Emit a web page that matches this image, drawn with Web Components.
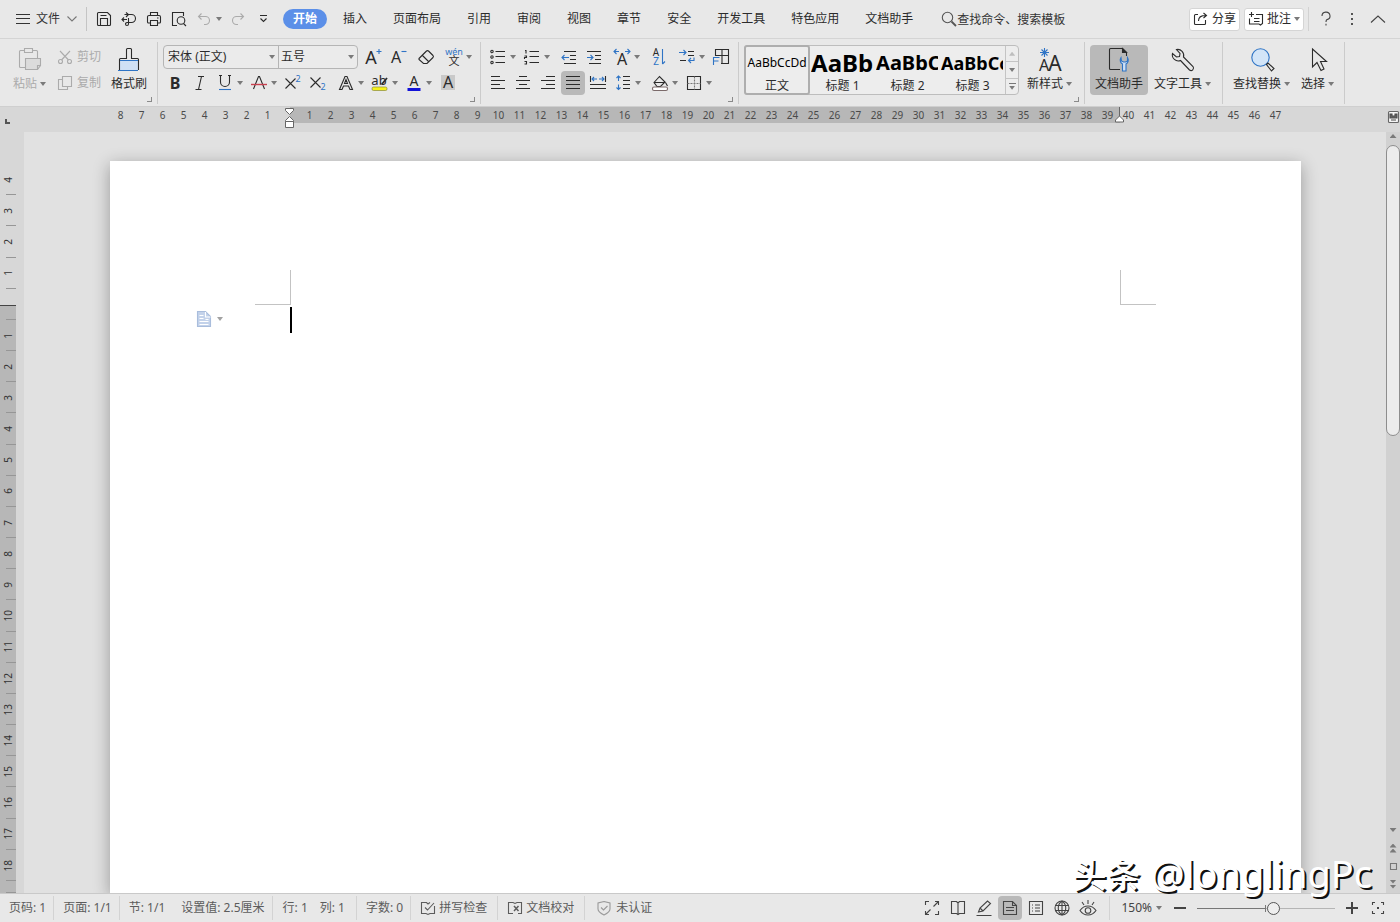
<!DOCTYPE html>
<html lang="zh-CN">
<head>
<meta charset="utf-8">
<title>文字文稿</title>
<style>
  html, body { margin: 0; height: 100%; }
  body { font: 12px/16px "Noto Sans", "Noto Sans CJK SC", sans-serif; color: #2b2b2b; background: #e1e1e1; overflow: hidden; }
</style>
</head>
<body>
<wps-app>
  <wps-menubar slot="menu"></wps-menubar>
  <wps-ribbon slot="ribbon"></wps-ribbon>
  <wps-hruler slot="hruler"></wps-hruler>
  <wps-vruler slot="vruler"></wps-vruler>
  <wps-page slot="page"></wps-page>
  <wps-scrollbar slot="scroll"></wps-scrollbar>
  <wps-statusbar slot="status"></wps-statusbar>
  <wps-watermark slot="overlay"><span slot="cjk">头条</span> @longlingPc</wps-watermark>
</wps-app>

<script>
const B = '#2f74c5';
const T = (x, y, s, t, extra = '') => `<text x="${x}" y="${y}" font-size="${s}" fill="currentColor" stroke="none" text-anchor="middle" ${extra}>${t}</text>`;
/* name: [width, height, markup] */
const ICONS = {
  menu: [14, 14, '<path d="M0 2.500h14M0 6.500h14M0 11.500h14"/>'],
  chev: [10, 8, '<path d="M.5 1.500 5 6l4.500-4.500"/>'],
  save: [16, 16, '<path d="M1.500 2.500a1 1 0 0 1 1-1h9l3 3v9a1 1 0 0 1-1 1h-11a1 1 0 0 1-1-1zM4.500 14V7.500h7V14M4.500 4.500h6"/>'],
  export: [16, 16, '<path d="M3.500 3.500h7a4 4 0 0 1 0 8H8M5 1.500 7.500 3.500 5 6M7.500 7v6a1.500 1.500 0 0 1-3 0c0-1.300 1-1.800 3.500-1.800M1 8.500h5M3 6.500 1 8.500l2 2"/>'],
  print: [16, 16, '<path d="M4.500 4.500v-3h7v3M4.500 12h-2a1 1 0 0 1-1-1V6a1.500 1.500 0 0 1 1.500-1.500h10A1.500 1.500 0 0 1 14.500 6v5a1 1 0 0 1-1 1h-2M4.500 9.500h7v5h-7zM11 7h1.500"/>'],
  preview: [16, 16, '<path d="M6 14.500H1.500v-13h11V5M12.500 12.500l2.500 2.500"/><circle cx="10" cy="9.500" r="3.800"/>'],
  undo: [14, 14, '<path d="M4.500 1.500 1.500 4.500l3 3M2 4.500h6.500a3.800 3.800 0 0 1 0 8H7"/>'],
  redo: [14, 14, '<path d="M9.500 1.500l3 3-3 3M12 4.500H5.500a3.800 3.800 0 0 0 0 8H7"/>'],
  more: [9, 8, '<path d="M1 .5h7M1.500 3.500l3 3 3-3"/>'],
  search: [16, 16, '<circle cx="6.500" cy="6.500" r="5.200"/><path d="M10.500 10.500l4.500 4.500" stroke-width="1.800"/>'],
  share: [16, 14, '<path d="M5 2.500H2.500a1 1 0 0 0-1 1v8a1 1 0 0 0 1 1h9a1 1 0 0 0 1-1V8M5.500 9c0-4 2-5.500 7.500-5.500M10.500 1 13.500 3.500 10.500 6"/>'],
  note: [16, 14, '<path d="M3.500 0v5M1 2.500h5M8 2.500h6.500v9l-2 1.500-1.500-1H1.500V6.500M6 6.500h5.500M6 9.500h5.500"/>'],
  help: [12, 16, '<path d="M2 5a4 3.800 0 1 1 5 3.600c-1 .5-1 1-1 2.400M6 12.800v1.700"/>'],
  dots: [4, 14, '<path d="M2 1v2M2 6v2M2 11v2" stroke-width="1.800"/>'],
  up: [14, 8, '<path d="M0 7.500 7 1l7 6.500"/>'],
  paste: [26, 26, '<path d="M8 20.500H3.500a1 1 0 0 1-1-1v-15a1 1 0 0 1 1-1H7M16 3.500h3.500a1 1 0 0 1 1 1V11M7.500 1.500h8v4h-8z"/><path fill="#dcdcdc" d="M8.500 11.500h15v7l-3 4h-12z"/><path d="M23.500 18.500h-3v4"/>'],
  cut: [16, 16, '<path d="M3 2l8.500 9M13 2 4.500 11"/><circle cx="3.500" cy="12.500" r="2"/><circle cx="12.500" cy="12.500" r="2"/>'],
  copy: [16, 16, '<path d="M5.500 1.500h9v10h-9zM5.500 4.500h-4v10h9v-3"/>'],
  brush: [26, 26, `<path fill="#cfe0f5" stroke="none" d="M4 14h18v9H4z"/><path d="M3.500 23V12.500a1 1 0 0 1 1-1h6v-9a1 1 0 0 1 1-1h3a1 1 0 0 1 1 1v9h6a1 1 0 0 1 1 1V23"/><path stroke="${B}" d="M4 13.500h18M2 23.500h20"/>`],
  aplus: [18, 18, T(7, 16, 18, 'A') + `<path stroke="${B}" d="M12.500 3.500h5M15 1v5"/>`],
  aminus: [18, 18, T(7, 15, 16, 'A') + `<path stroke="${B}" d="M12.500 3.500h5"/>`],
  eraser: [18, 18, '<path d="M2 10.500 9.500 3a1.500 1.500 0 0 1 2 0L16 7.500a1.500 1.500 0 0 1 0 2L10 15.500H6.500L2 11.500zM5.500 7.500l6 6"/>'],
  wen: [18, 20, `<g color="${B}">${T(9, 8, 9, 'wén')}</g>` + T(9, 18, 11, '文')],
  bold: [18, 18, T(9, 15, 16, 'B', 'font-weight="700"')],
  italic: [18, 18, '<path d="M7 2.500h6M4.500 15.500h6M10.500 2.500l-3 13"/>'],
  underline: [18, 18, `<path d="M4.500 1.500V8a4.500 4.500 0 0 0 9 0V1.500M3 1.500h3M12 1.500h3"/><path stroke="${B}" d="M3 15.500h12"/>`],
  strike: [18, 18, '<path d="M3.500 15 8.500 2.500h1l5 12.500"/><path stroke="#c8414f" stroke-width="1.400" d="M1 10.500h16"/>'],
  sup: [18, 18, `<path d="M1.500 4.500l10 10M11.500 4.500l-10 10"/><g color="${B}">${T(14, 8, 9, '2')}</g>`],
  sub: [18, 18, `<path d="M1.500 3.500l10 10M11.500 3.500l-10 10"/><g color="${B}">${T(14, 16, 9, '2')}</g>`],
  outline: [18, 18, '<path d="M2.500 15.500 8 2.500h2l5.500 13h-2.500L11.500 12h-5L5 15.500zM7.500 9.500h3L9 5.500z"/>'],
  mark: [18, 20, T(8, 12, 13, 'ab') + '<path d="M11 11l5-6" stroke-width="1.800"/><rect x="1" y="14" width="15" height="3.500" rx="1.500" fill="#f6f21a" stroke="#8a8a3a" stroke-width=".7"/>'],
  color: [18, 20, T(9, 13, 14, 'A') + '<path stroke="#1212d8" stroke-width="3" d="M2.500 16.500h13"/>'],
  shade: [18, 18, '<path fill="#c9c9c9" stroke="none" d="M2 1h14v15H2z"/>' + T(9, 14, 16, 'A')],
  bullets: [16, 16, '<path d="M5.500 2.500H15M5.500 7.500H15M5.500 13.500H15"/><circle cx="2" cy="2.500" r="1.200"/><circle cx="2" cy="8" r="1.200"/><circle cx="2" cy="13.500" r="1.200"/>'],
  numbers: [16, 16, '<path d="M5.500 2.500H15M5.500 7.500H15M5.500 13.500H15M1 1.500h1v3M.5 7h2v1.500h-2v1.500M.5 12.500h2v2.500h-2"/>'],
  outdent: [16, 16, `<path d="M3 2.500h12M9 6.500h6M9 10.500h6M3 14.500h12"/><path stroke="${B}" d="M1 8.500h7M3.500 6 1 8.500 3.500 11"/>`],
  indent: [16, 16, `<path d="M1 2.500h14M9 6.500h6M9 10.500h6M3 14.500h12"/><path stroke="${B}" d="M1 8.500h6M4.500 6 7 8.500 4.500 11"/>`],
  scale: [18, 18, T(9, 17, 16, 'A') + `<path stroke="${B}" d="M1 3.500h5M3.500 1 1 3.500 3.500 6M12 3.500h5M14.500 1 17 3.500 14.500 6"/>`],
  sort: [16, 18, T(5, 8, 10, 'A') + `<g color="${B}">${T(5, 17, 10, 'Z')}</g><path stroke="${B}" d="M11.500 1v15M11.500 16l2.500-2.500"/>`],
  tabs: [18, 18, `<path d="M10 3.500h6M10 7.500h6M2 12.500h6"/><path stroke="${B}" d="M1 4.500h7M5.500 2 8 4.500 5.500 7M16 9.500v3h-5M13 10l-2.500 2.500 2.500 2.500"/>`],
  frame: [18, 18, `<path d="M3.500 8V1.500h13v14H9M10 1.500v14M4 7.500h12.500"/><path stroke="${B}" d="M1.500 17V9.500h6M1.500 13h5"/>`],
  left: [16, 14, '<path d="M1 .5h9M1 4.500h14M1 8.500h9M1 12.500h14"/>'],
  center: [16, 14, '<path d="M4 .5h8M1 4.500h14M4 8.500h8M1 12.500h14"/>'],
  right: [16, 14, '<path d="M6 .5h9M1 4.500h14M6 8.500h9M1 12.500h14"/>'],
  justify: [16, 14, '<path d="M1 .5h14M1 4.500h14M1 8.500h14M1 12.500h14"/>'],
  distribute: [18, 16, `<path d="M1 9.500h16M1 13.500h16M1.500 1v6M16.500 1v6"/><path stroke="${B}" d="M3 4h5M5 2 3 4l2 2M10 4h5M13 2l2 2-2 2"/>`],
  spacing: [16, 16, `<path d="M8 1.500h7M8 5.500h7M8 9.500h7M8 13.500h7"/><path stroke="${B}" d="M3.500 1v5M1.500 3l2-2 2 2M3.500 9.500v5M1.500 12.500l2 2 2-2"/>`],
  bucket: [18, 18, '<path d="M3 8.500 8.500 2.500 14 8l-4.500 4.500H6zM3 8.500h11M14.500 8.500l2 3.500"/><rect x="1.500" y="13" width="15" height="3.500" rx="1.500" fill="#fff" stroke="#7b6a6a"/>'],
  border: [18, 18, '<path d="M2.500 2.500h13v13h-13z"/><path stroke="#777" d="M9.500 2.500v13M2.500 9.500h13" stroke-dasharray="2 1"/>'],
  newstyle: [26, 26, T(7, 24, 16, 'A') + T(18, 24, 21, 'A') + `<path stroke="${B}" d="M3 5.500h9M7.500 1v9M4.500 2.500l6 6M10.500 2.500l-6 6"/>`],
  dochelp: [26, 26, '<path d="M14 22.500H4.500a1 1 0 0 1-1-1v-19a1 1 0 0 1 1-1h12l4 4V9"/><path fill="currentColor" d="M16.500 1.500v4h4z"/><path fill="#cfe0f5" stroke="#2f74c5" d="M15 10.500a4.500 4.500 0 0 0 1.500 6.500v7h3.500v-7a4.500 4.500 0 0 0 1.500-6.500v3.500l-2 1h-2l-2-1z"/>'],
  wrench: [26, 26, '<path d="M6.500 2.500a6 6 0 0 1 7 7.500l9.500 9.500a2.500 2.500 0 0 1-3.500 3.500L10.500 13.500A6 6 0 0 1 2.500 6.500l4 3.500 3-.5.500-3z"/>'],
  find: [26, 26, `<circle cx="11.500" cy="10.500" r="8.700" fill="#d3e5f8" stroke="${B}"/><path d="M17.500 17.500l1.500-1.500 6 5.500-2.500 2.500z"/>`],
  pointer: [26, 26, '<path d="M7.500 2v18l4.500-4.500 4 8 3-1.500-3.500-7.500h6z"/>'],
  square: [9, 9, '<path d="M1.500 1.500h6v6h-6z"/>'],
  spell: [16, 14, '<path d="M10 1.500 8 3 6.500 1.500h-5v11H6l2 1 2-1h4.500V5M5 6.500 7.500 9 14 2"/>'],
  proof: [16, 14, '<path d="M6 12.500H1.500v-11H6l2 1 2-1h4.500v11H11"/><path stroke-width="1.500" d="M7 5l4.500 5M11.500 5 7 10"/>'],
  shield: [14, 16, '<path d="M7 1.500 13 3v6c0 3-3 4.500-6 6-3-1.500-6-3-6-6V3zM4 7.500 6.500 10l4-4"/>'],
  full: [16, 16, '<path d="M1.500 5V1.500H5M11 1.500h3.500V5M14.500 11v3.500H11M5 14.500H1.500V11M9.500 6.500l5-5M6.500 9.500l-5 5"/>'],
  book: [16, 16, '<path d="M8 3 6.500 1.500h-5v12h5L8 14.500l1.500-1h5v-12h-5zM8 3v11.500"/>'],
  pen: [16, 16, '<path d="M2.500 12 4 8l7.500-7 3 2.500L7 11zM4 8l3 3M.5 15.500h15"/>'],
  doc: [16, 16, '<path d="M1.500 1.500h9l4 4v9h-13zM10.500 1.500v4h4M4 7.500h8M4 10.500h8"/>'],
  outlineview: [16, 16, '<path d="M1.500 1.500h13v13h-13zM7 5h5M7 8h5M7 11h5M4 5h1M4 8h1M4 11h1"/>'],
  globe: [16, 16, '<circle cx="8" cy="8" r="7"/><path d="M8 1v14M1 5.500h14M1 10.500h14M8 1c-5 3.500-5 10.500 0 14M8 1c5 3.500 5 10.500 0 14"/>'],
  eye: [18, 18, '<path d="M1 11.500c4-6 12-6 16 0-4 6-12 6-16 0zM9 1v4M3 3l2 3M15 3l-2 3"/><circle cx="9" cy="11.500" r="2.800"/>'],
  minus: [14, 14, '<path d="M1 7h12" stroke-width="2"/>'],
  plus: [14, 14, '<path d="M1 7h12M7 1v12" stroke-width="2"/>'],
  focus: [14, 14, '<path d="M1.500 4V1.500H4M10 1.500h2.500V4M12.500 10v2.500H10M4 12.500H1.500V10"/><path d="M6 7h2" stroke-width="2"/>'],
  para: [14, 16, '<path fill="#c3d2ea" stroke="#a9bddc" d="M.5.500h8l5 5v10H.500z"/><path stroke="#fff" d="M8.500 1v5h5M2.500 4.500h4M2.500 7.500h4M2.500 10.500h9M2.500 13.500h9M8.500 8.500h3"/>'],
  reveal: [11, 12, '<rect x=".5" y=".5" width="10" height="11" rx="1" fill="#f5f5f5" stroke="#666"/><path fill="#666" d="M2 3h2v2h3V3h2v4H2zM3 9h5"/>']
};

function define(name, css, html) {
  customElements.define(name, class extends HTMLElement {
    connectedCallback() {
      if (this.shadowRoot) return;
      const root = this.attachShadow({ mode: 'open' });
      root.innerHTML = `<style>*,:host{box-sizing:border-box}button,select,input{font:inherit;color:inherit;margin:0}button{border:0;background:none;padding:0;cursor:default}${css}</style>` +
        (typeof html === 'function' ? html(this) : html);
    }
  });
}

define('wps-icon', ':host{display:inline-flex;flex:none}svg{display:block;overflow:visible}', el => {
  const [w, h, d] = ICONS[el.getAttribute('name')];
  return `<svg width="${w}" height="${h}" viewBox="0 0 ${w} ${h}" fill="none" stroke="currentColor" stroke-width="1.1" aria-hidden="true">${d}</svg>`;
});

define('wps-caret', ':host{display:block;flex:none;width:6px;height:4px;background:#7a7a7a;clip-path:polygon(0 0,100% 0,50% 100%)}:host([up]){clip-path:polygon(50% 0,100% 100%,0 100%)}:host([wide]){width:7px}', '');

/* small ribbon or toolbar button: icon with an optional drop-down arrow */
define('wps-tool', `
  :host{display:block;flex:none}
  button{display:flex;align-items:center;height:24px;border-radius:4px}
  span{display:flex;justify-content:center;width:24px}
  button{width:25px}
  :host([caret]) button{width:34px}
  :host([active]) button{background:#b9b9b9;width:24px;margin-right:1px}
  :host([off]) button{color:#ababab}`,
  el => `<button title="${el.getAttribute('tip') || ''}"><span><wps-icon name="${el.getAttribute('icon')}"></wps-icon></span>${el.hasAttribute('caret') ? '<wps-caret></wps-caret>' : ''}</button>`);

/* large ribbon button: icon above its label */
define('wps-big', `
  :host{display:block;flex:none}
  button{display:flex;flex-direction:column;align-items:center;height:50px;padding-top:2px;border-radius:4px;white-space:nowrap}
  :host([active]) button{background:#b9b9b9;padding-left:5px;padding-right:5px}
  :host([off]) button{color:#ababab}
  .l{display:flex;align-items:center;gap:3px;margin-top:3px}`,
  el => `<button><wps-icon name="${el.getAttribute('icon')}"></wps-icon><span class="l"><slot></slot>${el.hasAttribute('caret') ? '<wps-caret></wps-caret>' : ''}</span></button>`);

define('wps-group', `
  :host{display:flex;position:relative;flex:none;height:62px;padding:3px var(--r,5px) 0 var(--l,5px);border-right:1px solid #cbcbcb}
  i{position:absolute;right:5px;bottom:2px;width:5px;height:5px;border:solid #8a8a8a;border-width:0 1px 1px 0}`,
  el => `<slot></slot>${el.hasAttribute('launcher') ? '<i></i>' : ''}`);

define('wps-tab', `
  :host{display:block;flex:none}
  button{height:20px;padding:0 13px;white-space:nowrap}
  :host([active]) button{margin:0 3px;padding:0 10px;border-radius:10px;background:#5b8fe8;color:#fff;font-weight:700}`,
  '<button role="tab"><slot></slot></button>');

define('wps-menubar', `
  :host{display:flex;align-items:center;height:39px;background:#e8e8e8;border-bottom:1px solid #d4d4d4}
  .file{display:flex;align-items:center;height:24px;padding:0 9px 0 16px;border-right:1px solid #c4c4c4;color:#333}
  .file span{margin:0 7px 0 6px}.file wps-icon+span+wps-icon{color:#777}
  .quick{display:flex;padding:0 4px 0 5px}
  nav{display:flex}
  .find{display:flex;align-items:center;margin-left:15px;flex:1;min-width:0}
  .find input{width:120px;padding:0;border:0;background:none;outline:0;height:20px}
  .find input::placeholder{color:#333;opacity:1}
  .find label{display:flex;color:#555}
  .card{display:flex;align-items:center;height:23px;padding:0 3px;border:1px solid #d5d5d5;border-radius:3px;background:#fff;gap:3px;margin-right:4px;white-space:nowrap;flex:none}
  .end{display:flex;align-items:center;justify-content:space-between;flex:none;width:92px;height:24px;padding:0 15px 0 11px;border-left:1px solid #d2d2d2;color:#444}
  .end button{display:flex}`, `
  <button class="file"><wps-icon name="menu"></wps-icon><span>文件</span><wps-icon name="chev"></wps-icon></button>
  <div class="quick">
    <wps-tool icon="save" tip="保存"></wps-tool><wps-tool icon="export" tip="输出"></wps-tool><wps-tool icon="print" tip="打印"></wps-tool><wps-tool icon="preview" tip="打印预览"></wps-tool>
    <wps-tool icon="undo" caret off tip="撤销"></wps-tool><wps-tool icon="redo" off tip="恢复"></wps-tool><wps-tool icon="more" tip="更多"></wps-tool>
  </div>
  <nav role="tablist"><wps-tab active>开始</wps-tab>${['插入', '页面布局', '引用', '审阅', '视图', '章节', '安全', '开发工具', '特色应用', '文档助手'].map(t => `<wps-tab>${t}</wps-tab>`).join('')}</nav>
  <div class="find"><label for="q" aria-label="搜索"><wps-icon name="search"></wps-icon></label><input id="q" placeholder="查找命令、搜索模板"></div>
  <button class="card"><wps-icon name="share"></wps-icon>分享</button>
  <button class="card"><wps-icon name="note"></wps-icon>批注<wps-caret></wps-caret></button>
  <div class="end"><button title="帮助"><wps-icon name="help"></wps-icon></button><button title="更多"><wps-icon name="dots"></wps-icon></button><button title="折叠"><wps-icon name="up"></wps-icon></button></div>`);

define('wps-style', `
  :host{display:block;width:65px;flex:none}
  button{display:block;width:100%;height:48px;padding:0 1px;text-align:center}
  :host([active]){margin:-1px 0 -1px -1px;width:66px}
  :host([active]) button{border:2px solid #aeaeae;border-radius:3px;height:50px;padding:0}
  .s{display:block;width:62px;height:32px;line-height:32px;overflow:hidden;text-align:left;white-space:nowrap;color:#000;font-size:var(--s);font-weight:var(--w,700)}
  :host([active]) .s{text-align:center}
  .n{display:block;line-height:14px}`,
  '<button><span class="s"><slot name="sample"></slot></span><span class="n"><slot></slot></span></button>');

define('wps-gallery', `
  :host{display:flex;flex:none;width:275px;height:50px;border:1px solid #bdbdbd;border-radius:4px;background:#ededed}
  .bar{display:flex;flex-direction:column;flex:1;border-left:1px solid #c4c4c4}
  .bar button{display:flex;flex-direction:column;flex:1;align-items:center;justify-content:center;gap:2px}
  .bar button+button{border-top:1px solid #c4c4c4}
  .bar button:first-child{opacity:.4}
  i{width:7px;height:1px;background:#777}`, `
  <wps-style active style="--s:12px;--w:400"><span slot="sample">AaBbCcDd</span>正文</wps-style>
  <wps-style style="--s:24px"><span slot="sample">AaBb</span>标题 1</wps-style>
  <wps-style style="--s:20px"><span slot="sample">AaBbC</span>标题 2</wps-style>
  <wps-style style="--s:18px"><span slot="sample">AaBbCc</span>标题 3</wps-style>
  <div class="bar"><button title="上一行"><wps-caret up></wps-caret></button><button title="下一行"><wps-caret></wps-caret></button><button title="展开"><i></i><wps-caret></wps-caret></button></div>`);

define('wps-combo', `
  :host{display:flex;width:195px;height:24px;border:1px solid #b5b5b5;border-radius:4px;background:#ebebeb}
  div{display:flex;align-items:center;flex:1;min-width:0;padding-right:3px}
  div+div{flex:0 0 79px;border-left:1px solid #b5b5b5}
  select{appearance:none;flex:1;min-width:0;border:0;background:none;padding:0 0 0 4px;outline:0;height:22px}
  div+div select{padding-left:2px}`, `
  <div><select aria-label="字体"><option>宋体 (正文)</option></select><wps-caret></wps-caret></div>
  <div><select aria-label="字号"><option>五号</option></select><wps-caret></wps-caret></div>`);

define('wps-ribbon', `
  :host{display:flex;height:68px;padding-top:3px;background:#e8e8e8;border-bottom:1px solid #cfcfcf}
  .rows{display:flex;flex-direction:column;gap:2px}
  .row,.set{display:flex}.row{gap:3px}
  .clip{display:flex;flex-direction:column;gap:2px;margin:0 10px 0 11px}
  .clip button{display:flex;align-items:center;gap:4px;height:24px;color:#ababab}
  .g8{margin-left:8px}.g6{margin-left:6px}.g11{margin-left:11px}`, `
  <wps-group launcher style="--l:13px;--r:10px">
    <wps-big icon="paste" caret off>粘贴</wps-big>
    <div class="clip"><button><wps-icon name="cut"></wps-icon>剪切</button><button><wps-icon name="copy"></wps-icon>复制</button></div>
    <wps-big icon="brush">格式刷</wps-big>
  </wps-group>
  <wps-group launcher style="--r:4px"><div class="rows">
    <div class="row"><wps-combo></wps-combo><div class="set"><wps-tool icon="aplus"></wps-tool><wps-tool icon="aminus"></wps-tool></div><wps-tool icon="eraser"></wps-tool><wps-tool icon="wen" caret></wps-tool></div>
    <div class="row"><div class="set"><wps-tool icon="bold"></wps-tool><wps-tool icon="italic"></wps-tool><wps-tool icon="underline" caret></wps-tool><wps-tool icon="strike" caret></wps-tool><wps-tool icon="sup"></wps-tool><wps-tool icon="sub"></wps-tool></div>
    <div class="set"><wps-tool icon="outline" caret></wps-tool><wps-tool icon="mark" caret></wps-tool><wps-tool icon="color" caret></wps-tool><wps-tool icon="shade"></wps-tool></div></div>
  </div></wps-group>
  <wps-group launcher style="--r:4px"><div class="rows">
    <div class="row"><div class="set"><wps-tool icon="bullets" caret></wps-tool><wps-tool icon="numbers" caret></wps-tool></div><div class="set"><wps-tool icon="outdent"></wps-tool><wps-tool icon="indent"></wps-tool></div><wps-tool icon="scale" caret></wps-tool><wps-tool icon="sort"></wps-tool><div class="set"><wps-tool icon="tabs" caret></wps-tool><wps-tool icon="frame"></wps-tool></div></div>
    <div class="row"><div class="set"><wps-tool icon="left"></wps-tool><wps-tool icon="center"></wps-tool><wps-tool icon="right"></wps-tool><wps-tool icon="justify" active></wps-tool><wps-tool icon="distribute"></wps-tool><wps-tool icon="spacing" caret></wps-tool></div>
    <div class="set"><wps-tool icon="bucket" caret></wps-tool><wps-tool icon="border" caret></wps-tool></div></div>
  </div></wps-group>
  <wps-group launcher style="--r:12px"><wps-gallery></wps-gallery><wps-big class="g8" icon="newstyle" caret>新样式</wps-big></wps-group>
  <wps-group style="--r:11px"><wps-big icon="dochelp" active>文档助手</wps-big><wps-big class="g6" icon="wrench" caret>文字工具</wps-big></wps-group>
  <wps-group style="--l:10px;--r:10px"><wps-big icon="find" caret>查找替换</wps-big><wps-big class="g11" icon="pointer" caret>选择</wps-big></wps-group>`);

const range = (a, b) => Array.from({ length: Math.abs(b - a) + 1 }, (_, i) => a < b ? a + i : a - i);

define('wps-hruler', `
  :host{display:flex;height:25px;background:#d7d7d7;color:#4a4a4a;font-size:10px}
  .corner{flex:0 0 110px;padding:12px 0 0 5px}
  .corner i{display:block;width:5px;height:5px;border:solid #555;border-width:0 0 2px 2px}
  .scale{display:flex;flex:1;min-width:0;height:16px;overflow:visible;background:linear-gradient(90deg,transparent 180px,#b7b7b7 180px 1010px,transparent 1010px)}
  span{flex:0 0 21px;text-align:center;line-height:16px;position:relative}
  svg{position:absolute;top:0;left:6px;overflow:visible}
  .end{flex:0 0 14px;display:flex;justify-content:center;padding-top:4px}`, () => `
  <div class="corner"><i></i></div>
  <div class="scale">${range(8, 1).map(n => `<span>${n}</span>`).join('')}
    <span><svg width="11" height="21" fill="#fff" stroke="#666"><path d="M1.500 1.500h8v2l-4 4-4-4zM5.500 9.500l4 4v1h-8v-1zM1.500 14.500h8v6h-8z"/></svg></span>
    ${range(1, 47).map(n => `<span>${n}${n === 39 ? '<svg width="11" height="18" style="left:17px" fill="#fff" stroke="#666"><path d="M5.500 0v9M5.500 9l4 4v2h-8v-2z"/></svg>' : ''}</span>`).join('')}</div>
  <div class="end"><wps-icon name="reveal"></wps-icon></div>`);

define('wps-vruler', `
  :host{display:flex;flex-direction:column;width:24px;min-height:0;overflow:hidden;padding-top:32px;background:#d7d7d7;color:#333;font-size:10px}
  div{display:flex;align-items:center;justify-content:center;flex:1;width:16px;min-height:0;background:linear-gradient(#969696,#969696) 6px 100%/10px 1px no-repeat var(--c,transparent)}
  span{writing-mode:vertical-rl;transform:rotate(180deg);line-height:14px}
  .in{--c:#b7b7b7}
  .zero{background:linear-gradient(#969696,#969696) 6px 100%/10px 1px no-repeat,linear-gradient(transparent 50%,#444 50%,#444 54%,#b7b7b7 54%)}
  .last{flex:0 0 12px}`, () =>
  range(4, 1).map(n => `<div><span>${n}</span></div>`).join('') + '<div class="zero"></div>' +
  range(1, 18).map(n => `<div class="in"><span>${n}</span></div>`).join('') + '<div class="in last"></div>');

define('wps-page', `
  :host{display:block;min-width:0;padding:29px 85px 0 86px;overflow:hidden}
  article{height:100%;background:#fff;box-shadow:0 4px 16px rgba(0,0,0,.32);padding-top:109px}
  .marks{display:flex;justify-content:space-between;padding:0 145px}
  .marks i{width:36px;height:35px;border:solid #c3c3c3;border-width:0 1px 1px 0}
  .marks i+i{border-width:0 0 1px 1px}
  .line{display:flex;align-items:flex-start;height:26px;margin-top:2px;padding-left:87px}
  .line button{display:flex;align-items:center;gap:6px;width:93px;height:24px}
  .line button wps-caret{opacity:.7}
  .cursor{width:2px;height:26px;background:#000}`, `
  <article aria-label="文档"><div class="marks"><i></i><i></i></div>
  <div class="line"><button title="段落布局"><wps-icon name="para"></wps-icon><wps-caret></wps-caret></button><span class="cursor"></span></div></article>`);

define('wps-scrollbar', `
  :host{display:flex;flex-direction:column;align-items:center;width:14px;background:#d1d1d1}
  button{display:flex;flex-direction:column;align-items:center;justify-content:center;flex:none;width:14px;height:18px;gap:1px;color:#777}
  button:first-of-type{height:8px;margin-bottom:5px}
  .track{flex:1;width:14px}
  .thumb{height:291px;border:1px solid #8d8d8d;border-radius:7px;background:#ececec}`, `
  <button title="向上"><wps-caret up wide></wps-caret></button>
  <div class="track"><div class="thumb"></div></div>
  <button title="向下"><wps-caret wide></wps-caret></button>
  <button title="上一页"><wps-caret up wide></wps-caret><wps-caret up wide></wps-caret></button>
  <button title="选择浏览对象"><wps-icon name="square"></wps-icon></button>
  <button title="下一页"><wps-caret wide></wps-caret><wps-caret wide></wps-caret></button>`);

define('wps-statusbar', `
  :host{display:flex;align-items:center;height:29px;background:#e8e8e8;border-top:1px solid #c9c9c9;color:#5c5c5c;white-space:nowrap}
  .cell{display:flex;align-items:center;height:24px;padding:0 7px 0 9px;border-right:1px solid #d3d3d3;gap:16px}
  .cell.w{padding:0 11px 0 10px;gap:12px}
  .cell.i{gap:3px;padding:0 10px 0 9px}
  .cell.last{border:0;padding-left:12px;gap:5px}
  .cell.last wps-icon{color:#999}
  .views{display:flex;margin-left:auto;padding-right:8px;border-right:1px solid #d3d3d3;color:#444}
  .views button{display:flex;align-items:center;justify-content:center;width:24px;height:24px;margin:0 1px;border-radius:4px}
  .views .on{background:#b9b9b9}
  .zoom{display:flex;align-items:center;gap:4px;padding:0 11px;color:#444}
  .z{display:flex;align-items:center;color:#444}
  input{appearance:none;width:138px;height:14px;margin:0 10px;background:linear-gradient(#777,#777) 68px 50%/1px 7px no-repeat,linear-gradient(90deg,#777 50%,#b5b5b5 50%) 0 50%/100% 1px no-repeat}
  input::-webkit-slider-thumb{appearance:none;width:13px;height:13px;border:1px solid #555;border-radius:50%;background:#eee}
  .f{margin:0 15px 0 12px}`, `
  <div class="cell"><span>页码: 1</span></div>
  <div class="cell"><span>页面: 1/1</span></div>
  <div class="cell"><span>节: 1/1</span><span>设置值: 2.5厘米</span></div>
  <div class="cell w"><span>行: 1</span><span>列: 1</span></div>
  <div class="cell"><span>字数: 0</span></div>
  <button class="cell i"><wps-icon name="spell"></wps-icon>拼写检查</button>
  <button class="cell i"><wps-icon name="proof"></wps-icon>文档校对</button>
  <button class="cell i last"><wps-icon name="shield"></wps-icon>未认证</button>
  <div class="views">${[['full', '全屏'], ['book', '阅读'], ['pen', '写作'], ['doc', '页面'], ['outlineview', '大纲'], ['globe', 'Web'], ['eye', '护眼']].map(([n, t]) => `<button title="${t}"${n === 'doc' ? ' class="on"' : ''}><wps-icon name="${n}"></wps-icon></button>`).join('')}</div>
  <button class="zoom"><span>150%</span><wps-caret></wps-caret></button>
  <button class="z" title="缩小"><wps-icon name="minus"></wps-icon></button>
  <input type="range" aria-label="显示比例" min="0" max="100" value="56">
  <button class="z" title="放大"><wps-icon name="plus"></wps-icon></button>
  <button class="z f" title="适应窗口"><wps-icon name="focus"></wps-icon></button>`);

define('wps-watermark', `
  :host{position:absolute;right:28px;bottom:22px;font-size:38px;line-height:50px;color:#fff;text-shadow:2px 2px 0 #111;white-space:nowrap;pointer-events:none}
  ::slotted(span){font-size:34px;font-weight:500}`,
  '<slot name="cjk"></slot><slot></slot>');

define('wps-app', `
  :host{display:grid;grid-template-rows:auto auto auto minmax(0,1fr) auto;height:100vh;position:relative;overflow:hidden;background:#e1e1e1}
  .work{display:grid;grid-template-columns:auto minmax(0,1fr) auto;min-height:0}`, `
  <slot name="menu"></slot><slot name="ribbon"></slot><slot name="hruler"></slot>
  <div class="work"><slot name="vruler"></slot><slot name="page"></slot><slot name="scroll"></slot></div>
  <slot name="status"></slot><slot name="overlay"></slot>`);
</script>
</body>
</html>
